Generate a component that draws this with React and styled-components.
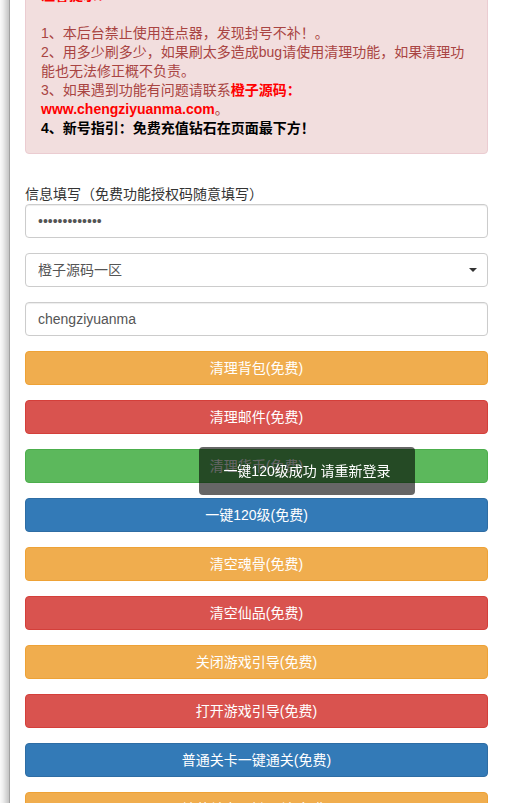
import React from "react";
import styled, { createGlobalStyle } from "styled-components";

const GlobalStyle = createGlobalStyle`
  html, body {
    margin: 0;
    padding: 0;
    background: #fff;
    overflow: hidden;
  }

  body {
    font-family: "Liberation Sans", "Noto Sans CJK SC", sans-serif;
    font-size: 14px;
    color: #333;
  }
`;

const BUTTON_COLORS = {
  warning: { bg: "#f0ad4e", border: "#eea236" },
  danger: { bg: "#d9534f", border: "#d43f3a" },
  success: { bg: "#5cb85c", border: "#4cae4c" },
  primary: { bg: "#337ab7", border: "#2e6da4" },
};

const ACTIONS = [
  { label: "清理背包(免费)", kind: "warning" },
  { label: "清理邮件(免费)", kind: "danger" },
  { label: "清理货币(免费)", kind: "success" },
  { label: "一键120级(免费)", kind: "primary" },
  { label: "清空魂骨(免费)", kind: "warning" },
  { label: "清空仙品(免费)", kind: "danger" },
  { label: "关闭游戏引导(免费)", kind: "warning" },
  { label: "打开游戏引导(免费)", kind: "danger" },
  { label: "普通关卡一键通关(免费)", kind: "primary" },
  { label: "精英关卡一键通关(免费)", kind: "warning" },
];

const Page = styled.div`
  margin-left: 9px;
  min-height: 900px;
  border-left: 1px solid #a2a2a2;
  box-shadow: -3px 0 8px rgba(0, 0, 0, 0.3);
  padding: 0 15px;
  background: #fff;
`;

const Column = styled.div`
  width: 463px;
  margin-top: -30px;
`;

const Alert = styled.div`
  background: #f2dede;
  border: 1px solid #ebccd1;
  border-radius: 4px;
  color: #a94442;
  padding: 15px;
  line-height: 19px;
  margin-bottom: 30px;
`;

const Strong = styled.b`
  color: ${(props) => props.$color || "inherit"};
`;

const Label = styled.label`
  display: block;
  line-height: 20px;
  color: #333;
`;

const Field = styled.input`
  display: block;
  box-sizing: border-box;
  width: 100%;
  height: 34px;
  padding: 6px 12px;
  margin-bottom: 15px;
  border: 1px solid #ccc;
  border-radius: 4px;
  font: inherit;
  color: #555;
  background: #fff;
  box-shadow: inset 0 1px 1px rgba(0, 0, 0, 0.075);
  outline: none;
`;

const SelectWrap = styled.div`
  position: relative;
  margin-bottom: 15px;

  &::after {
    content: "";
    position: absolute;
    right: 11px;
    top: 15px;
    border-left: 4px solid transparent;
    border-right: 4px solid transparent;
    border-top: 4px solid #333;
    pointer-events: none;
  }
`;

const Select = styled.select`
  display: block;
  box-sizing: border-box;
  width: 100%;
  height: 34px;
  padding: 6px 12px;
  border: 1px solid #ccc;
  border-radius: 4px;
  font: inherit;
  color: #555;
  background: #fff;
  appearance: none;
  outline: none;
`;

const ActionButton = styled.button`
  display: block;
  box-sizing: border-box;
  width: 100%;
  height: 34px;
  padding: 6px 12px;
  margin-bottom: 15px;
  border: 1px solid ${(props) => BUTTON_COLORS[props.$kind].border};
  border-radius: 4px;
  background: ${(props) => BUTTON_COLORS[props.$kind].bg};
  color: #fff;
  font: inherit;
  line-height: 20px;
  text-align: center;
  cursor: pointer;
`;

const Toast = styled.div`
  position: fixed;
  left: 199px;
  top: 447px;
  width: 216px;
  height: 48px;
  display: flex;
  align-items: center;
  justify-content: center;
  border-radius: 4px;
  background: rgba(0, 0, 0, 0.6);
  color: #fff;
  line-height: 20px;
`;

export default function App() {
  return (
    <>
      <GlobalStyle />
      <Page>
        <Column>
          <Alert>
            <Strong $color="#f00">温馨提示：</Strong>
            <br />
            <br />
            1、本后台禁止使用连点器，发现封号不补！。
            <br />
            2、用多少刷多少，如果刷太多造成bug请使用清理功能，如果清理功能也无法修正概不负责。
            <br />
            3、如果遇到功能有问题请联系
            <Strong $color="#f00">橙子源码：www.chengziyuanma.com</Strong>。
            <br />
            <Strong $color="#000">4、新号指引：免费充值钻石在页面最下方！</Strong>
          </Alert>

          <Label>信息填写（免费功能授权码随意填写）</Label>
          <Field type="password" defaultValue="chengziyuanma" />
          <SelectWrap>
            <Select defaultValue="1">
              <option value="1">橙子源码一区</option>
              <option value="2">橙子源码二区</option>
            </Select>
          </SelectWrap>
          <Field type="text" defaultValue="chengziyuanma" />

          {ACTIONS.map((action) => (
            <ActionButton key={action.label} type="button" $kind={action.kind}>
              {action.label}
            </ActionButton>
          ))}
        </Column>
      </Page>
      <Toast>一键120级成功 请重新登录</Toast>
    </>
  );
}
